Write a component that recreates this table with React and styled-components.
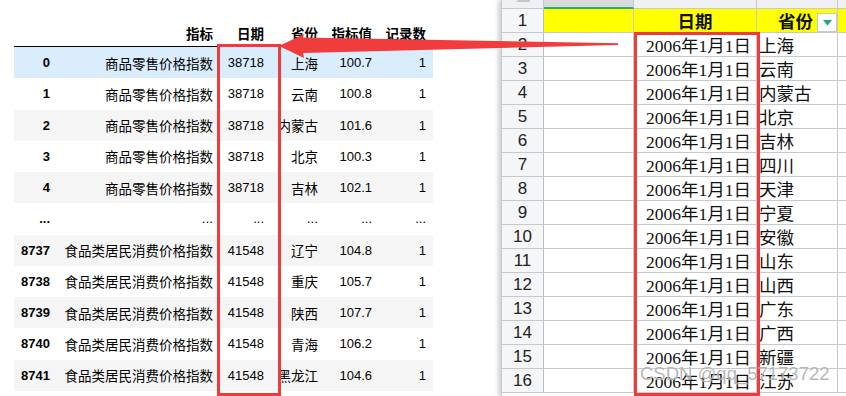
import React from 'react'
import styled, { createGlobalStyle } from 'styled-components'

const GlobalStyle = createGlobalStyle`
  html, body {
    margin: 0;
    padding: 0;
    background: #ffffff;
  }
  * {
    box-sizing: border-box;
  }
`

const Page = styled.div`
  position: relative;
  display: flex;
  width: 846px;
  height: 396px;
  overflow: hidden;
  background: #ffffff;
`

/* ---------- left: dataframe ---------- */

const LeftPanel = styled.div`
  width: 433px;
  padding: 20px 0 0 14px;
  font-family: "Liberation Sans", Arial, "Noto Sans CJK SC", sans-serif;
  font-size: 13px;
  color: #000;
`

const Frame = styled.div`
  display: grid;
  grid-template-columns: 43px 163px 51px 54px 54px 54px;
  width: 419px;
`

const HeadRow = styled.div`
  display: contents;
`

const HeadCell = styled.div`
  height: 27px;
  padding-right: 7px;
  display: flex;
  align-items: center;
  justify-content: flex-end;
  font-weight: bold;
  font-size: 13.5px;
  border-bottom: 1px solid #000;
  white-space: nowrap;
`

const BodyCell = styled.div`
  height: 31.25px;
  padding-right: 7px;
  display: flex;
  align-items: center;
  justify-content: flex-end;
  white-space: nowrap;
  font-size: ${p => (p.$cjk ? '13.5px' : '13px')};
  font-weight: ${p => (p.$index ? 'bold' : 'normal')};
  background: ${p => (p.$hover ? '#d9edfd' : p.$odd ? '#f5f5f5' : '#ffffff')};
`

/* ---------- right: spreadsheet ---------- */

const Sheet = styled.div`
  margin-left: auto;
  width: 345px;
  height: 396px;
  overflow: hidden;
  border-left: 1px solid #c9cbd2;
  box-shadow: -3px 0 4px rgba(0, 0, 0, 0.18);
  background: #ffffff;
`

const SheetGrid = styled.div`
  display: grid;
  grid-template-columns: 42px 90px 123px 81px 1fr;
  margin-top: -15px;
`

const ColHead = styled.div`
  height: 24px;
  display: flex;
  align-items: center;
  justify-content: center;
  padding-bottom: 4px;
  font-family: "Liberation Sans", Arial, sans-serif;
  font-size: 16px;
  color: ${p => (p.$active ? '#1a9c5c' : '#666')};
  background: ${p => (p.$active ? '#d8dae0' : '#eff0f3')};
  border-right: 1px solid #c6c9d2;
  border-bottom: ${p => (p.$active ? '2px solid #21b26f' : '1px solid #c6c9d2')};
`

const RowHead = styled.div`
  height: 24px;
  display: flex;
  align-items: center;
  justify-content: center;
  font-family: "Liberation Sans", Arial, sans-serif;
  font-size: 17px;
  color: #222;
  background: #f5f6f8;
  border-right: 1px solid #b9bdc9;
  border-bottom: 1px solid #c6c9d2;
`

const Cell = styled.div`
  height: 24px;
  display: flex;
  align-items: center;
  justify-content: ${p => p.$align || 'flex-start'};
  padding: ${p => p.$pad || '0 2px'};
  gap: 4px;
  font-family: "Liberation Serif", "Times New Roman", "Noto Sans CJK SC", serif;
  font-size: 17.5px;
  font-weight: ${p => (p.$bold ? 'bold' : 'normal')};
  color: #111;
  white-space: nowrap;
  overflow: hidden;
  background: ${p => (p.$yellow ? '#ffff00' : '#ffffff')};
  border-right: 1px solid #c6c9d2;
  border-bottom: 1px solid #c6c9d2;
`

const FilterButton = styled.div`
  width: 20px;
  height: 19px;
  margin-bottom: -4px;
  display: flex;
  align-items: center;
  justify-content: center;
  background: #ffffff;
  border: 1px solid #c9c9c9;
  flex-shrink: 0;
`

/* ---------- overlays ---------- */

const Overlay = styled.svg`
  position: absolute;
  left: 0;
  top: 0;
  pointer-events: none;
`

const RedBox = styled.div`
  position: absolute;
  left: ${p => p.$x}px;
  top: ${p => p.$y}px;
  width: ${p => p.$w}px;
  height: ${p => p.$h}px;
  border: 3px solid #ef3b3b;
  pointer-events: none;
`

const Watermark = styled.div`
  position: absolute;
  left: 640px;
  top: 363px;
  font-family: "Liberation Sans", Arial, sans-serif;
  font-size: 18.5px;
  color: rgba(150, 150, 150, 0.7);
  text-shadow: 0 0 1px rgba(255, 255, 255, 0.8);
  pointer-events: none;
  white-space: nowrap;
`

const columns = ['', '指标', '日期', '省份', '指标值', '记录数']

const frameRows = [
  ['0', '商品零售价格指数', '38718', '上海', '100.7', '1'],
  ['1', '商品零售价格指数', '38718', '云南', '100.8', '1'],
  ['2', '商品零售价格指数', '38718', '内蒙古', '101.6', '1'],
  ['3', '商品零售价格指数', '38718', '北京', '100.3', '1'],
  ['4', '商品零售价格指数', '38718', '吉林', '102.1', '1'],
  ['...', '...', '...', '...', '...', '...'],
  ['8737', '食品类居民消费价格指数', '41548', '辽宁', '104.8', '1'],
  ['8738', '食品类居民消费价格指数', '41548', '重庆', '105.7', '1'],
  ['8739', '食品类居民消费价格指数', '41548', '陕西', '107.7', '1'],
  ['8740', '食品类居民消费价格指数', '41548', '青海', '106.2', '1'],
  ['8741', '食品类居民消费价格指数', '41548', '黑龙江', '104.6', '1'],
]

const provinces = [
  '上海', '云南', '内蒙古', '北京', '吉林', '四川', '天津', '宁夏',
  '安徽', '山东', '山西', '广东', '广西', '新疆', '江苏',
]

function DataFrame() {
  return (
    <LeftPanel>
      <Frame>
        <HeadRow>
          {columns.map((c, i) => (
            <HeadCell key={i}>{c}</HeadCell>
          ))}
        </HeadRow>
        {frameRows.map((row, r) =>
          row.map((v, i) => (
            <BodyCell
              key={r + '-' + i}
              $index={i === 0}
              $cjk={i === 1 || i === 3}
              $hover={r === 0}
              $odd={r % 2 === 0}
            >
              {v}
            </BodyCell>
          ))
        )}
      </Frame>
    </LeftPanel>
  )
}

function Spreadsheet() {
  return (
    <Sheet>
      <SheetGrid>
        <ColHead>
          <svg width="16" height="24" viewBox="0 0 16 24">
            <polygon points="15,5 15,19 1,19" fill="#c4c6cc" />
          </svg>
        </ColHead>
        <ColHead $active>A</ColHead>
        <ColHead>B</ColHead>
        <ColHead>C</ColHead>
        <ColHead>D</ColHead>

        <RowHead>1</RowHead>
        <Cell $yellow />
        <Cell $yellow $bold $align="center">日期</Cell>
        <Cell $yellow $bold $align="flex-end" $pad="0 0 0 2px">
          省份
          <FilterButton>
            <svg width="9" height="6" viewBox="0 0 9 6">
              <polygon points="0,0 9,0 4.5,5.5" fill="#1faa6a" />
            </svg>
          </FilterButton>
        </Cell>
        <Cell $yellow />

        {provinces.map((p, i) => (
          <React.Fragment key={p}>
            <RowHead>{i + 2}</RowHead>
            <Cell />
            <Cell $align="flex-end" $pad="0 5px 0 0">2006年1月1日</Cell>
            <Cell>{p}</Cell>
            <Cell />
          </React.Fragment>
        ))}
      </SheetGrid>
    </Sheet>
  )
}

export default function App() {
  return (
    <Page>
      <GlobalStyle />
      <DataFrame />
      <Spreadsheet />

      <RedBox $x={217} $y={44} $w={64} $h={352} />
      <RedBox $x={634} $y={32} $w={126} $h={364} />

      <Overlay width="846" height="396" viewBox="0 0 846 396">
        <polygon
          points="279,46 304,34 303,37.5 618,43.3 618,45 303,53 304,58"
          fill="#f03c3c"
        />
      </Overlay>

      <Watermark>CSDN @qq_57173722</Watermark>
    </Page>
  )
}
